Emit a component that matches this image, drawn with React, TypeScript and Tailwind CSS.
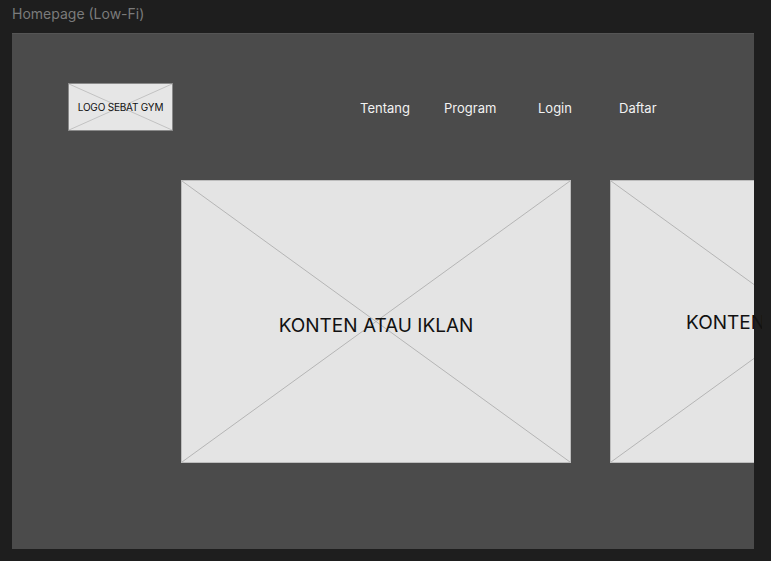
const navItems = [
  { label: "Tentang", w: "w-[84px]" },
  { label: "Program", w: "w-[94px]" },
  { label: "Login", w: "w-[81px]" },
  { label: "Daftar", w: "w-[38px]" },
];

function Cross({ stroke = "#b5b5b5" }: { stroke?: string }) {
  return (
    <svg
      className="absolute inset-0 h-full w-full"
      viewBox="0 0 100 100"
      preserveAspectRatio="none"
    >
      <line x1="0" y1="0" x2="100" y2="100" stroke={stroke} strokeWidth="1" vectorEffect="non-scaling-stroke" />
      <line x1="0" y1="100" x2="100" y2="0" stroke={stroke} strokeWidth="1" vectorEffect="non-scaling-stroke" />
    </svg>
  );
}

export default function App() {
  return (
    <div className="h-[561px] w-[771px] overflow-hidden bg-[#1e1e1e] font-['Inter',sans-serif]">
      <div className="pl-3 pt-[5px] text-[14px] leading-[18px] text-[#7b7b7b]">Homepage (Low-Fi)</div>

      <div className="ml-3 mt-[10px] h-[516px] w-[742px] bg-[#4b4b4b] border-t border-[#555]">
        {/* header */}
        <div className="flex items-center pl-14 pt-[49px]">
          <div className="relative flex h-12 w-[105px] items-center justify-center border border-[#8a8a8a] bg-[#e6e6e6]">
            <Cross stroke="#c2c2c2" />
            <span className="relative text-[10px] tracking-[-0.2px] text-[#111]">LOGO SEBAT GYM</span>
          </div>
          <nav className="ml-[187px] mt-1 flex text-[13px] text-[#f2f2f2]">
            {navItems.map((n) => (
              <span key={n.label} className={n.w}>
                {n.label}
              </span>
            ))}
          </nav>
        </div>

        {/* content cards */}
        <div className="mt-[49px] flex gap-[39px] pl-[169px]">
          <div className="relative flex h-[283px] w-[390px] shrink-0 items-center justify-center border border-[#bdbdbd] bg-[#e4e4e4]">
            <Cross />
            <span className="relative mt-[9px] text-[19px] text-[#111]">KONTEN ATAU IKLAN</span>
          </div>
          <div className="relative h-[283px] w-[144px] shrink-0">
            <div className="h-full w-full overflow-hidden">
              <div className="relative h-[283px] w-[390px] border border-[#bdbdbd] bg-[#e4e4e4]">
                <Cross />
              </div>
            </div>
            <div className="absolute left-[76px] top-[129px] w-[76px] overflow-hidden">
              <span className="whitespace-nowrap text-[19px] text-[#111]">KONTEN ATAU IKLAN</span>
            </div>
          </div>
        </div>
      </div>
    </div>
  );
}
